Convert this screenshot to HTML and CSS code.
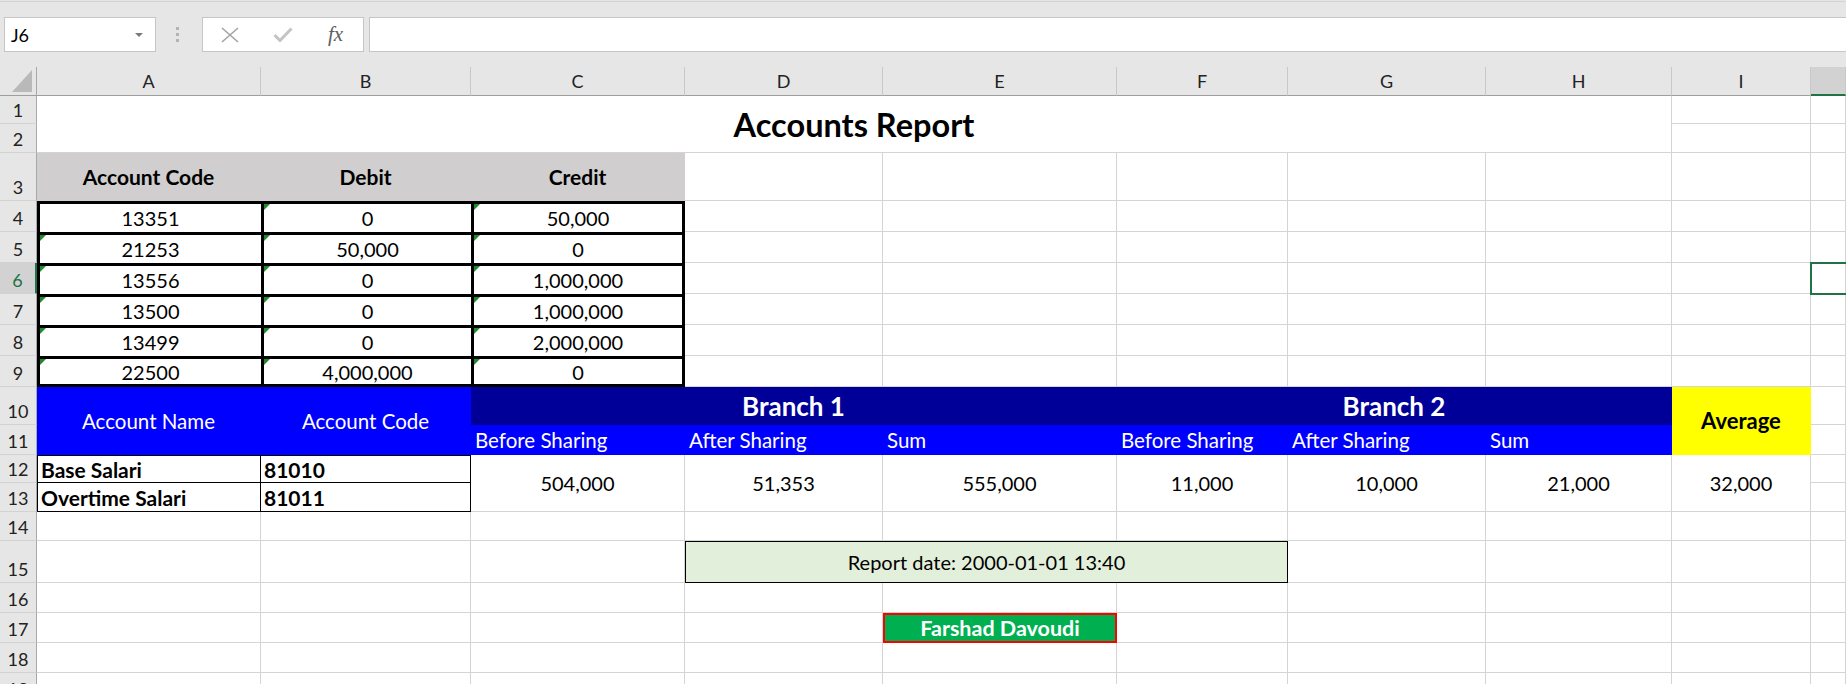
FILE: index.html
```html
<!DOCTYPE html>
<html>
<head>
<meta charset="utf-8">
<link rel="stylesheet" href="styles.css">
</head>
<body>
<div class="toolbar">
  <div class="namebox"><span>J6</span><span class="dd"></span></div>
  <div class="dots"><span class="dot"></span><span class="dot"></span><span class="dot"></span></div>
  <div class="fbtns">
    <span class="fb"><svg width="18" height="16" viewBox="0 0 18 16"><path d="M1 1L17 15M17 1L1 15" stroke="#a3a3a3" stroke-width="1.6" fill="none"/></svg></span>
    <span class="fb"><svg width="20" height="15" viewBox="0 0 20 15"><path d="M1.5 8L7 13.5L18.5 1.5" stroke="#c4c4c4" stroke-width="3" fill="none"/></svg></span>
    <span class="fb fx">fx</span>
  </div>
  <div class="fbar"></div>
</div>
<div class="sheet">
  <div class="corner"><svg width="36" height="28" viewBox="0 0 36 28"><polygon points="32,3 32,25 12,25" fill="#b9b9b9"/></svg></div>
  <div class="ch">A</div><div class="ch">B</div><div class="ch">C</div><div class="ch">D</div><div class="ch">E</div><div class="ch">F</div><div class="ch">G</div><div class="ch">H</div><div class="ch">I</div><div class="ch sel"></div>

  <div class="rh">1</div><div class="c title">Accounts Report</div><div class="c"></div><div class="c"></div>
  <div class="rh">2</div><div class="c"></div><div class="c"></div>

  <div class="rh">3</div><div class="c gh">Account Code</div><div class="c gh">Debit</div><div class="c gh">Credit</div><div class="c"></div><div class="c"></div><div class="c"></div><div class="c"></div><div class="c"></div><div class="c"></div><div class="c"></div>

  <div class="rh">4</div><div class="k">13351</div><div class="k t">0</div><div class="k t r">50,000</div><div class="c"></div><div class="c"></div><div class="c"></div><div class="c"></div><div class="c"></div><div class="c"></div><div class="c"></div>

  <div class="rh">5</div><div class="k t">21253</div><div class="k t">50,000</div><div class="k t r">0</div><div class="c"></div><div class="c"></div><div class="c"></div><div class="c"></div><div class="c"></div><div class="c"></div><div class="c"></div>

  <div class="rh sel">6</div><div class="k t">13556</div><div class="k t">0</div><div class="k t r">1,000,000</div><div class="c"></div><div class="c"></div><div class="c"></div><div class="c"></div><div class="c"></div><div class="c"></div><div class="c cur"></div>

  <div class="rh">7</div><div class="k t">13500</div><div class="k t">0</div><div class="k t r">1,000,000</div><div class="c"></div><div class="c"></div><div class="c"></div><div class="c"></div><div class="c"></div><div class="c"></div><div class="c"></div>

  <div class="rh">8</div><div class="k t">13499</div><div class="k t">0</div><div class="k t r">2,000,000</div><div class="c"></div><div class="c"></div><div class="c"></div><div class="c"></div><div class="c"></div><div class="c"></div><div class="c"></div>

  <div class="rh">9</div><div class="k t b">22500</div><div class="k t b">4,000,000</div><div class="k t r b">0</div><div class="c"></div><div class="c"></div><div class="c"></div><div class="c"></div><div class="c"></div><div class="c"></div><div class="c"></div>

  <div class="rh">10</div><div class="c bl v">Account Name</div><div class="c bl v">Account Code</div><div class="c nv">Branch 1</div><div class="c nv">Branch 2</div><div class="c yl">Average</div><div class="c"></div>

  <div class="rh">11</div><div class="c bl s">Before Sharing</div><div class="c bl s">After Sharing</div><div class="c bl s">Sum</div><div class="c bl s">Before Sharing</div><div class="c bl s">After Sharing</div><div class="c bl s">Sum</div><div class="c"></div>

  <div class="rh">12</div><div class="tn l tp">Base Salari</div><div class="tn tp">81010</div><div class="c m2">504,000</div><div class="c m2">51,353</div><div class="c m2">555,000</div><div class="c m2">11,000</div><div class="c m2">10,000</div><div class="c m2">21,000</div><div class="c m2">32,000</div><div class="c"></div>

  <div class="rh">13</div><div class="tn l">Overtime Salari</div><div class="tn">81011</div><div class="c"></div>

  <div class="rh">14</div><div class="c"></div><div class="c"></div><div class="c"></div><div class="c"></div><div class="c"></div><div class="c"></div><div class="c"></div><div class="c"></div><div class="c"></div><div class="c"></div>

  <div class="rh">15</div><div class="c"></div><div class="c"></div><div class="c"></div><div class="c rd">Report date: 2000-01-01 13:40</div><div class="c"></div><div class="c"></div><div class="c"></div><div class="c"></div>

  <div class="rh">16</div><div class="c"></div><div class="c"></div><div class="c"></div><div class="c"></div><div class="c"></div><div class="c"></div><div class="c"></div><div class="c"></div><div class="c"></div><div class="c"></div>

  <div class="rh">17</div><div class="c"></div><div class="c"></div><div class="c"></div><div class="c"></div><div class="c nm">Farshad Davoudi</div><div class="c"></div><div class="c"></div><div class="c"></div><div class="c"></div><div class="c"></div>

  <div class="rh">18</div><div class="c"></div><div class="c"></div><div class="c"></div><div class="c"></div><div class="c"></div><div class="c"></div><div class="c"></div><div class="c"></div><div class="c"></div><div class="c"></div>

  <div class="rh">19</div><div class="c"></div><div class="c"></div><div class="c"></div><div class="c"></div><div class="c"></div><div class="c"></div><div class="c"></div><div class="c"></div><div class="c"></div><div class="c"></div>
</div>
</body>
</html>
```

FILE: styles.css
```css
* { box-sizing: border-box; }
html, body { margin: 0; padding: 0; }
body {
  font-family: "Lato", "Noto Sans", sans-serif;
  background: #fff;
  color: #000;
  width: 1846px;
  height: 684px;
  overflow: hidden;
}

/* formula bar area */
.toolbar {
  height: 67px;
  background: linear-gradient(#e6e6e6 0 1px, #d3d3d3 1px 2px, #e6e6e6 2px);
  display: flex;
  align-items: flex-start;
  padding: 17px 0 0 4px;
}
.namebox {
  width: 152px;
  height: 35px;
  background: #fff;
  border: 1px solid #c6c6c6;
  display: flex;
  align-items: center;
  justify-content: space-between;
  padding: 0 12px 0 6px;
  font-size: 18px;
}
.dd {
  width: 0;
  height: 0;
  border-left: 4px solid transparent;
  border-right: 4px solid transparent;
  border-top: 4px solid #7a7a7a;
}
.dots {
  width: 46px;
  height: 35px;
  display: flex;
  flex-direction: column;
  align-items: center;
  gap: 3px;
  padding: 10px 4px 0 0;
}
.dot { width: 3px; height: 3px; background: #b3b3b3; }
.fbtns {
  width: 162px;
  height: 35px;
  background: #fff;
  border: 1px solid #c6c6c6;
  display: flex;
  align-items: center;
}
.fb {
  width: 53px;
  display: flex;
  justify-content: center;
  align-items: center;
}
.fx {
  font-family: "Liberation Serif", serif;
  font-style: italic;
  font-size: 21px;
  color: #5e5e5e;
}
.fbar {
  flex: 1;
  margin-left: 5px;
  height: 35px;
  background: #fff;
  border: 1px solid #c6c6c6;
  border-right: none;
}

/* sheet grid */
.sheet {
  display: grid;
  grid-template-columns: 37px 224px 210px 214px 198px 234px 171px 198px 186px 139px 1fr;
  grid-template-rows: 29px 28px 29px 48px 31px 31px 31px 31px 31px 31px 38px 30px 28px 29px 29px 42px 30px 30px 30px 30px;
  font-size: 20px;
}
.c, .k, .tn {
  display: flex;
  align-items: center;
  white-space: nowrap;
  overflow: hidden;
  border-right: 1px solid #d4d4d4;
  border-bottom: 1px solid #d4d4d4;
}

.corner {
  background: #e6e6e6;
  border-right: 1px solid #a9a9a9;
  border-bottom: 1px solid #9e9e9e;
}
.corner svg { display: block; }
.ch {
  background: #e6e6e6;
  border-right: 1px solid #c8c8c8;
  border-bottom: 1px solid #9e9e9e;
  display: flex;
  align-items: center;
  justify-content: center;
  font-size: 18px;
  color: #222;
}
.ch.sel {
  background: #d2d2d2;
  border-bottom: 2px solid #217346;
}
.rh {
  background: #e6e6e6;
  border-right: 1px solid #a9a9a9;
  border-bottom: 1px solid #d2d2d2;
  display: flex;
  justify-content: center;
  align-items: flex-end;
  padding-bottom: 2px;
  font-size: 18px;
  color: #222;
}
.rh.sel {
  background: #d2d2d2;
  color: #217346;
  border-right: 2px solid #217346;
}

.title {
  grid-column: span 8;
  grid-row: span 2;
  justify-content: center;
  font-weight: 700;
  font-size: 32.5px;
}
.gh {
  background: #d0cece;
  border-color: transparent;
  justify-content: center;
  font-weight: 700;
  font-size: 21px;
}

/* thick bordered table */
.k {
  position: relative;
  justify-content: center;
  border: 0;
  border-left: 3px solid #000;
  border-top: 3px solid #000;
}
.k.r { border-right: 3px solid #000; }
.k.b { border-bottom: 3px solid #000; }
.t::before {
  content: "";
  position: absolute;
  top: 0;
  left: 0;
  border-top: 6px solid #1e8c2a;
  border-right: 6px solid transparent;
}

.cur { position: relative; overflow: visible; }
.cur::after {
  content: "";
  position: absolute;
  top: -1px;
  bottom: -2px;
  left: -1px;
  right: -20px;
  border: 2px solid #217346;
}

/* second table */
.bl {
  background: #0000ff;
  color: #fff;
  border-color: transparent;
  font-size: 20.5px;
}
.bl.v { grid-row: span 2; justify-content: center; }
.bl.s { justify-content: flex-start; padding-left: 4px; }
.nv {
  grid-column: span 3;
  background: #000099;
  color: #fff;
  border-color: transparent;
  justify-content: center;
  font-weight: 700;
  font-size: 26px;
}
.yl {
  grid-row: span 2;
  background: #ffff00;
  border-color: transparent;
  justify-content: center;
  font-weight: 700;
  font-size: 22px;
}
.tn {
  font-weight: 700;
  font-size: 21px;
  padding-left: 3px;
  border-right: 1px solid #000;
  border-bottom: 1px solid #000;
}
.tn.l { border-left: 1px solid #000; }
.tn.tp { border-top: 1px solid #000; }
.m2 { grid-row: span 2; justify-content: center; }

.rd {
  grid-column: span 3;
  background: #e2efda;
  border: 1px solid #000;
  justify-content: center;
}
.nm {
  background: #00b050;
  border: 2px solid #ff0000;
  color: #fff;
  font-weight: 700;
  font-size: 21.5px;
  justify-content: center;
}
```
